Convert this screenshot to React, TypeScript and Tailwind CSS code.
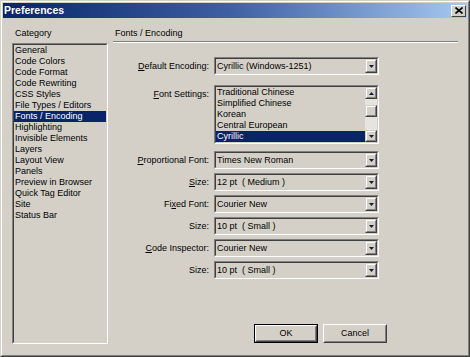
import React from "react";

const categories = [
  "General",
  "Code Colors",
  "Code Format",
  "Code Rewriting",
  "CSS Styles",
  "File Types / Editors",
  "Fonts / Encoding",
  "Highlighting",
  "Invisible Elements",
  "Layers",
  "Layout View",
  "Panels",
  "Preview in Browser",
  "Quick Tag Editor",
  "Site",
  "Status Bar",
];

const encodings = ["Traditional Chinese", "Simplified Chinese", "Korean", "Central European", "Cyrillic"];

function Sunken({ className, children }: { className: string; children?: React.ReactNode }) {
  return (
    <div className={`border border-t-[#808080] border-l-[#808080] border-b-white border-r-white ${className}`}>
      <div className="h-full w-full border border-t-[#404040] border-l-[#404040] border-b-[#d4d0c8] border-r-[#d4d0c8]">
        {children}
      </div>
    </div>
  );
}

function ArrowBtn({ up, className }: { up?: boolean; className: string }) {
  return (
    <div
      className={`border border-t-[#d4d0c8] border-l-[#d4d0c8] border-b-[#404040] border-r-[#404040] bg-[#d4d0c8] ${className}`}
    >
      <div className="h-full w-full border border-t-white border-l-white border-b-[#808080] border-r-[#808080] flex items-center justify-center">
        <svg width="5" height="3" viewBox="0 0 5 3">
          {up ? <path d="M2.5 0 L5 3 L0 3 Z" fill="#141c3c" /> : <path d="M0 0 L5 0 L2.5 3 Z" fill="#141c3c" />}
        </svg>
      </div>
    </div>
  );
}

function Select({ value }: { value: string }) {
  return (
    <Sunken className="w-[165px] h-[18px] bg-[#d4d0c8]">
      <div className="flex h-full items-center">
        <div className="flex-1 pl-[1px] leading-[11px] whitespace-pre overflow-hidden">{value}</div>
        <ArrowBtn className="w-[12px] h-full" />
      </div>
    </Sunken>
  );
}

function Row({ label, value }: { label: React.ReactNode; value: string }) {
  return (
    <div className="flex items-center h-[18px]">
      <div className="w-[97px] pr-[1px] text-right leading-[11px] whitespace-nowrap">{label}</div>
      <div className="ml-[4px]">
        <Select value={value} />
      </div>
    </div>
  );
}

function U({ children }: { children: React.ReactNode }) {
  return <span className="underline underline-offset-[1px]">{children}</span>;
}

function ArrowThumb() {
  return (
    <div className="h-[12px] w-full border border-t-[#d4d0c8] border-l-[#d4d0c8] border-b-[#404040] border-r-[#404040] bg-[#d4d0c8]">
      <div className="h-full w-full border border-t-white border-l-white border-b-[#808080] border-r-[#808080]" />
    </div>
  );
}

export default function App() {
  return (
    <div className="w-[470px] h-[357px] bg-[#d4d0c8] font-['Liberation_Sans',Arial,sans-serif] text-[9px] text-black">
      <div className="h-full border border-t-[#d4d0c8] border-l-[#d4d0c8] border-b-[#404040] border-r-[#404040]">
        <div className="h-full border border-t-white border-l-white border-b-[#808080] border-r-[#808080] p-[1px] flex flex-col">
          {/* Title bar */}
          <div className="h-[15px] flex items-center bg-gradient-to-r from-[#0a246a] via-[#3f62a4] to-[#a6caf0]">
            <div className="flex-1 pl-[1px] text-white font-bold text-[10.5px] leading-[15px]">Preferences</div>
            <div className="w-[15px] h-[12px] mr-[1px] border border-t-white border-l-white border-b-[#404040] border-r-[#404040] bg-[#d4d0c8] flex items-center justify-center">
              <svg width="8" height="7" viewBox="0 0 8 7">
                <path d="M0.5 0.5 L7.5 6.5 M7.5 0.5 L0.5 6.5" stroke="#000" strokeWidth="1.6" />
              </svg>
            </div>
          </div>

          {/* Body */}
          <div className="flex-1 flex pl-[9px] pt-[10px]">
            {/* Left column */}
            <div className="w-[96px] flex flex-col">
              <div className="pl-[3px] h-[11px] leading-[11px]">Category</div>
              <Sunken className="mt-[4px] h-[301px] bg-[#d4d0c8]">
                <div className="flex flex-col">
                  {categories.map((c) => (
                    <div
                      key={c}
                      className={`h-[11px] leading-[11px] pl-[1px] whitespace-nowrap ${
                        c === "Fonts / Encoding" ? "bg-[#0a246a] text-white" : ""
                      }`}
                    >
                      {c}
                    </div>
                  ))}
                </div>
              </Sunken>
            </div>

            {/* Right column */}
            <div className="ml-[5px] w-[345px] flex flex-col">
              <div className="pl-[2px] h-[11px] leading-[11px]">Fonts / Encoding</div>
              <div className="mt-[2px] border-t border-t-[#808080] border-b border-b-white" />

              <div className="mt-[14px]">
                <Row
                  label={
                    <>
                      <U>D</U>efault Encoding:
                    </>
                  }
                  value="Cyrillic (Windows-1251)"
                />
              </div>

              <div className="mt-[10px] flex items-start">
                <div className="w-[97px] pr-[1px] pt-[4px] text-right leading-[11px]">
                  <U>F</U>ont Settings:
                </div>
                <div className="ml-[4px]">
                  <Sunken className="w-[165px] h-[59px] bg-[#d4d0c8]">
                    <div className="flex h-full">
                      <div className="flex-1 flex flex-col">
                        {encodings.map((e) => (
                          <div
                            key={e}
                            className={`h-[11px] leading-[11px] pl-[1px] whitespace-nowrap ${
                              e === "Cyrillic" ? "bg-[#0a246a] text-white" : ""
                            }`}
                          >
                            {e}
                          </div>
                        ))}
                      </div>
                      <div className="w-[12px] flex flex-col bg-[#e6e4df]">
                        <ArrowBtn up className="h-[12px] w-full" />
                        <div className="h-[6px]" />
                        <ArrowThumb />
                        <div className="flex-1" />
                        <ArrowBtn className="h-[12px] w-full" />
                      </div>
                    </div>
                  </Sunken>
                </div>
              </div>

              <div className="mt-[7px] flex flex-col gap-[4px]">
                <Row
                  label={
                    <>
                      <U>P</U>roportional Font:
                    </>
                  }
                  value="Times New Roman"
                />
                <Row
                  label={
                    <>
                      <U>S</U>ize:
                    </>
                  }
                  value="12 pt  ( Medium )"
                />
                <Row
                  label={
                    <>
                      Fi<U>x</U>ed Font:
                    </>
                  }
                  value="Courier New"
                />
                <Row label="Size:" value="10 pt  ( Small )" />
                <Row
                  label={
                    <>
                      <U>C</U>ode Inspector:
                    </>
                  }
                  value="Courier New"
                />
                <Row label="Size:" value="10 pt  ( Small )" />
              </div>

              <div className="mt-[45px] ml-[141px] flex gap-[5px]">
                <div className="w-[64px] h-[19px] border border-black">
                  <div className="h-full border border-t-white border-l-white border-b-[#404040] border-r-[#404040]">
                    <div className="h-full border border-t-[#d4d0c8] border-l-[#d4d0c8] border-b-[#808080] border-r-[#808080] flex items-center justify-center leading-[11px]">
                      OK
                    </div>
                  </div>
                </div>
                <div className="w-[64px] h-[19px] border border-t-white border-l-white border-b-[#404040] border-r-[#404040]">
                  <div className="h-full border border-t-[#d4d0c8] border-l-[#d4d0c8] border-b-[#808080] border-r-[#808080] flex items-center justify-center leading-[11px]">
                    Cancel
                  </div>
                </div>
              </div>
            </div>
          </div>
        </div>
      </div>
    </div>
  );
}
